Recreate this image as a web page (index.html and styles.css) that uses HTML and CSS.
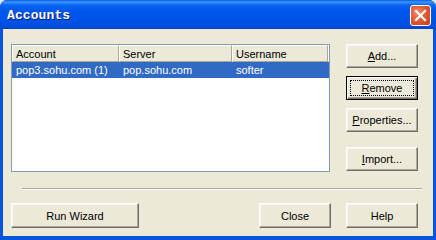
FILE: index.html
```html
<!DOCTYPE html>
<html>
<head>
<meta charset="utf-8">
<link rel="stylesheet" href="styles.css">
</head>
<body>
<div class="window">
  <div class="titlebar">
    <span class="title">Accounts</span>
    <span class="close-btn">
      <svg width="21" height="21" viewBox="0 0 21 21">
        <path d="M6 6 L15 15 M15 6 L6 15" stroke="#fff" stroke-width="2.2" stroke-linecap="square"/>
      </svg>
    </span>
  </div>
  <div class="body">
    <div class="top">
      <div class="list">
        <div class="header">
          <div class="hcell c1">Account</div>
          <div class="hcell c2">Server</div>
          <div class="hcell c3">Username</div>
          <div class="hfill"></div>
        </div>
        <div class="row selected">
          <div class="cell c1">pop3.sohu.com (1)</div>
          <div class="cell c2">pop.sohu.com</div>
          <div class="cell c3">softer</div>
        </div>
      </div>
      <div class="side">
        <button class="btn"><u>A</u>dd...</button>
        <button class="btn default"><span class="focus"><u>R</u>emove</span></button>
        <button class="btn"><u>P</u>roperties...</button>
        <button class="btn import"><u>I</u>mport...</button>
      </div>
    </div>
    <div class="sep"></div>
    <div class="bottom">
      <button class="btn wide">Run Wizard</button>
      <div class="spacer"></div>
      <button class="btn">Close</button>
      <button class="btn">Help</button>
    </div>
  </div>
</div>
</body>
</html>
```

FILE: styles.css
```css
* { box-sizing: border-box; }
html, body { margin: 0; padding: 0; background: #ECE9D8; }
body { font-family: "Liberation Sans", Arial, sans-serif; font-size: 11px; color: #000; }

.window {
  width: 436px;
  height: 240px;
  background: #0855DD;
  display: flex;
  flex-direction: column;
  padding: 0 3px 4px 3px;
  border-radius: 7px 7px 0 0;
}
.titlebar {
  height: 29px;
  margin: 0 -3px;
  padding: 0 5px 0 7px;
  display: flex;
  align-items: center;
  justify-content: space-between;
  border-radius: 7px 7px 0 0;
  background: linear-gradient(to bottom, #0A5FDF 0px, #3D95FF 2px, #0A66F0 5px, #0058EE 10px, #0053E8 20px, #0050DE 26px, #003FCF 29px);
}
.title {
  font-family: "Liberation Mono", "Courier New", monospace;
  font-weight: bold;
  font-size: 13px;
  color: #fff;
  text-shadow: 1px 1px 0 #0A1C6A;
  letter-spacing: 0.1px;
  margin-top: 2px;
}
.close-btn {
  width: 21px;
  height: 21px;
  border: 1px solid #fff;
  border-radius: 3px;
  background: radial-gradient(circle at 35% 35%, #F08A6A 0%, #E2552F 50%, #C3401F 100%);
  display: flex;
  align-items: center;
  justify-content: center;
  margin-top: 1px;
}
.close-btn svg { display: block; margin: -1px; }

.body {
  flex: 1;
  background: #ECE9D8;
  padding: 15px 15px 0 8px;
  display: flex;
  flex-direction: column;
}
.top {
  display: flex;
  height: 128px;
}
.list {
  width: 320px;
  background: #fff;
  border: 1px solid;
  border-color: #7F9DB9;
  display: flex;
  flex-direction: column;
}
.header {
  display: flex;
  height: 17px;
  background: #ECE9D8;
}
.hcell {
  border-top: 1px solid #fff;
  border-left: 1px solid #fff;
  border-right: 1px solid #ACA899;
  border-bottom: 1px solid #ACA899;
  padding: 2px 0 0 3px;
  line-height: 12px;
  white-space: nowrap;
}
.hfill {
  flex: 1;
  border-top: 1px solid #fff;
  border-left: 1px solid #fff;
  border-bottom: 1px solid #ACA899;
}
.c1 { width: 107px; }
.c2 { width: 113px; }
.c3 { width: 96px; }
.row {
  display: flex;
  height: 16px;
  align-items: center;
}
.row.selected { background: #316AC5; color: #fff; }
.cell { padding-left: 4px; white-space: nowrap; line-height: 14px; }

.side {
  margin-left: 16px;
  display: flex;
  flex-direction: column;
  gap: 8px;
}
.btn {
  font-family: "Liberation Sans", Arial, sans-serif;
  font-size: 11px;
  color: #000;
  width: 72px;
  height: 24px;
  background: #ECE9D8;
  border: 1px solid;
  border-color: #fff #716F64 #716F64 #fff;
  box-shadow: inset -1px -1px 0 #ACA899, inset 1px 1px 0 #F5F4EE;
  padding: 0;
  margin: 0;
  display: flex;
  align-items: center;
  justify-content: center;
}
.btn u { text-decoration: underline; text-underline-offset: 1px; }
.btn.default {
  border: 1px solid #000;
  box-shadow: inset 1px 1px 0 #fff, inset -1px -1px 0 #716F64, inset -2px -2px 0 #ACA899;
}
.focus {
  display: flex;
  align-items: center;
  justify-content: center;
  width: 64px;
  height: 16px;
  border: 1px dotted #000;
}
.btn.import { margin-top: 7px; }

.sep {
  margin: 16px 0 0 11px;
  width: 400px;
  height: 2px;
  border-top: 1px solid #ACA899;
  border-bottom: 1px solid #fff;
}
.bottom {
  display: flex;
  margin-top: 13px;
  gap: 15px;
}
.btn.wide { width: 128px; height: 25px; }
.bottom .btn { height: 25px; }
.spacer { flex: 1; }
```
